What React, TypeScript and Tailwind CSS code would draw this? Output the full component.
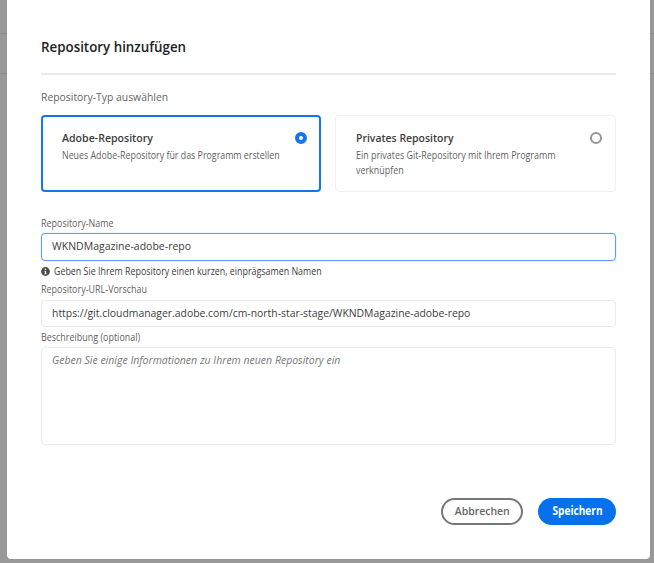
import type { ReactNode } from "react";

function Label({ children, className = "" }: { children: ReactNode; className?: string }) {
  return (
    <div className={`h-4 text-[10px] leading-4 text-[#5f5f5f] ${className}`}>
      <span className="inline-block origin-left scale-x-[0.895] whitespace-nowrap">{children}</span>
    </div>
  );
}

export default function App() {
  return (
    <div className="flex h-[563px] w-[654px] overflow-hidden bg-[#999] font-['Open_Sans','Noto_Sans',sans-serif] text-[#3c3c3c]">
      <Backdrop />
      <main className="flex h-[559px] w-[643px] flex-col rounded-b-[4px] bg-white pt-[37px] pr-[34px] pl-[34px] shadow-[0_0_1px_#777]">
        <h1 className="h-5 text-sm leading-5 font-semibold text-[#222]">
          <span className="inline-block origin-left scale-x-[0.953]">Repository hinzufügen</span>
        </h1>
        <hr className="mt-4 h-0.5 border-0 bg-[#eaeaea]" />
        <p className="mt-[14px] h-4 text-[11.5px] leading-4 text-[#666]">
          <span className="inline-block origin-left scale-x-[0.902]">Repository-Typ auswählen</span>
        </p>

        <div className="mt-[10px] grid h-[77px] grid-cols-[280px_281px] gap-[14px]">
          <section className="flex justify-between rounded-[4px] border-2 border-[#1277ec] pt-[13px] pr-3 pl-[19px]">
            <div>
              <h2 className="h-4 text-[11.5px] leading-4 font-semibold">
                <span className="inline-block origin-left scale-x-[0.92] whitespace-nowrap">Adobe-Repository</span>
              </h2>
              <p className="mt-0.5 w-[217px] text-[10px] leading-[15px] text-[#5f5f5f]">
                <span className="inline-block origin-left scale-x-[0.884] whitespace-nowrap">Neues Adobe-Repository für das Programm erstellen</span>
              </p>
            </div>
            <span className="mt-0.5 size-3 shrink-0 rounded-full border-4 border-[#1277ec] bg-white" />
          </section>
          <section className="flex justify-between rounded-[4px] border-[1.5px] border-[#f0f0f0] pt-[14px] pr-[13px] pl-5">
            <div>
              <h2 className="h-4 text-[11.5px] leading-4 font-semibold">
                <span className="inline-block origin-left scale-x-[0.908] whitespace-nowrap">Privates Repository</span>
              </h2>
              <p className="mt-0.5 w-[200px] text-[10px] leading-[15px] text-[#5f5f5f]">
                <span className="inline-block origin-left scale-x-[0.891] whitespace-nowrap">
                  Ein privates Git-Repository mit Ihrem Programm
                  <br />
                  verknüpfen
                </span>
              </p>
            </div>
            <span className="mt-0.5 size-3 shrink-0 rounded-full border-2 border-[#959595] bg-white" />
          </section>
        </div>

        <Label className="mt-[23px]">Repository-Name</Label>
        <div className="mt-0.5 h-7 rounded-[4px] border border-[#5c9ef5] pl-[10px] text-[11.5px] leading-6 shadow-[0_0_1px_#5c9ef5]">
          <span className="inline-block origin-left scale-x-[0.914]">WKNDMagazine-adobe-repo</span>
        </div>
        <div className="mt-0.5 flex h-4 items-center text-[10px] leading-4">
          <svg className="mr-[4px] size-[9px] shrink-0" viewBox="0 0 9 9">
            <circle cx="4.5" cy="4.5" r="4.4" fill="#4b4b4b" />
            <circle cx="4.5" cy="2.3" r=".8" fill="#fff" />
            <path d="M3.3 4h1.8v2.5h.6v.8H3.3v-.8h.6V4.7h-.6z" fill="#fff" />
          </svg>
          <span className="origin-left scale-x-[0.887] whitespace-nowrap">Geben Sie Ihrem Repository einen kurzen, einprägsamen Namen</span>
        </div>
        <Label className="mt-0.5">Repository-URL-Vorschau</Label>
        <div className="mt-[3px] h-[27px] rounded-[4px] border border-[#ebebeb] pl-[10px] text-[11.5px] leading-6">
          <span className="inline-block origin-left scale-x-[0.904]">https://git.cloudmanager.adobe.com/cm-north-star-stage/WKNDMagazine-adobe-repo</span>
        </div>
        <Label className="mt-0.5">Beschreibung (optional)</Label>
        <div className="mt-0.5 h-[98px] rounded-[4px] border border-[#ebebeb] pt-1 pl-[10px] text-[11.5px] leading-4 text-[#777] italic">
          <span className="inline-block origin-left scale-x-[0.914]">Geben Sie einige Informationen zu Ihrem neuen Repository ein</span>
        </div>

        <div className="mt-[53px] flex justify-end gap-[15px] text-[11.5px] leading-4">
          <button className="flex h-[27px] w-[82px] items-center justify-center rounded-full border-2 border-[#777] pb-px font-semibold text-[#666]">
            <span className="inline-block scale-x-[0.91]">Abbrechen</span>
          </button>
          <button className="flex h-[27px] w-[78px] items-center justify-center rounded-full bg-[#0671ea] pb-px font-bold text-white">
            <span className="inline-block scale-x-[0.88]">Speichern</span>
          </button>
        </div>
      </main>
      <Backdrop />
    </div>
  );
}

// Edge strip of the dimmed page behind the dialog, with its two table rules.
function Backdrop() {
  return (
    <div className="min-w-0 flex-1 basis-[4px] pt-[33px] first:flex-none first:basis-[7px]">
      <div className="h-[41px] border-y border-[#8c8c8c]" />
    </div>
  );
}
